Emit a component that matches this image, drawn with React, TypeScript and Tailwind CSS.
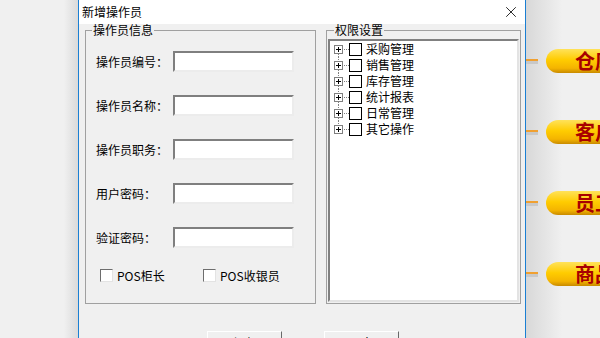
import { X } from 'lucide-react';

const font = { fontFamily: '"Noto Sans CJK SC", "Noto Sans", sans-serif' };

const fields = ['操作员编号：', '操作员名称：', '操作员职务：', '用户密码：', '验证密码：'];
const perms = ['采购管理', '销售管理', '库存管理', '统计报表', '日常管理', '其它操作'];
const menus = ['仓库管理', '客户管理', '员工管理', '商品管理'];

function Check({ dark }: { dark?: boolean }) {
  return (
    <span
      className={
        dark
          ? 'block w-[13px] h-[13px] bg-white border border-black'
          : 'block w-[13px] h-[13px] bg-white border border-t-[#6d6d6d] border-l-[#6d6d6d] border-r-[#e3e3e3] border-b-[#e3e3e3]'
      }
    />
  );
}

// plus box with dotted tree connectors
function Expander({ first, last }: { first: boolean; last: boolean }) {
  return (
    <svg width="15" height="16" className="block shrink-0">
      {!first && <line x1="4.5" y1="0" x2="4.5" y2="4" stroke="#808080" strokeDasharray="1 1" />}
      {!last && <line x1="4.5" y1="13" x2="4.5" y2="16" stroke="#808080" strokeDasharray="1 1" />}
      <rect x="0.5" y="4.5" width="8" height="8" fill="white" stroke="#808080" />
      <line x1="2" y1="8.5" x2="7" y2="8.5" stroke="black" />
      <line x1="4.5" y1="6" x2="4.5" y2="11" stroke="black" />
      <line x1="10" y1="8.5" x2="15" y2="8.5" stroke="#808080" strokeDasharray="1 1" />
    </svg>
  );
}

export default function App() {
  return (
    <div className="w-[600px] h-[338px] overflow-hidden flex bg-[#f0f0f0] text-[12px] text-black" style={font}>
      {/* page behind, left */}
      <div className="w-[78px] shrink-0 bg-[linear-gradient(to_right,#f0f0f0_82%,#dadada)]" />

      {/* dialog */}
      <div className="w-[448px] shrink-0 flex flex-col border-x border-[#1a7fd3] bg-[#f0f0f0]">
        <div className="h-[24px] shrink-0 bg-white flex items-center justify-between pl-[3px] pr-[5px]">
          <span className="leading-[12px]">新增操作员</span>
          <X size={18} strokeWidth={1.1} />
        </div>

        <div className="flex pl-[6px] pr-[4px] gap-[10px]">
          <fieldset className="w-[231px] h-[280px] border border-[#a0a0a0] px-0 pb-0">
            <legend className="ml-[6px] px-[1px] leading-[12px]">操作员信息</legend>
            <div className="flex flex-col pt-[15px] pl-[10px] gap-[23px]">
              {fields.map((f) => (
                <div key={f} className="flex items-center h-[21px]">
                  <span className="w-[77px] leading-[12px]">{f}</span>
                  <span className="w-[121px] h-[21px] bg-white border-2 border-t-[#7f7f7f] border-l-[#7f7f7f] border-r-[#ececec] border-b-[#ececec]" />
                </div>
              ))}
            </div>
            <div className="flex items-center mt-[21px] pl-[14px]">
              <div className="flex items-center gap-[4px] w-[103px]">
                <Check />
                <span className="leading-[12px]">POS柜长</span>
              </div>
              <div className="flex items-center gap-[4px]">
                <Check />
                <span className="leading-[12px]">POS收银员</span>
              </div>
            </div>
          </fieldset>

          <fieldset className="w-[195px] h-[280px] border border-[#a0a0a0] px-[1px] pb-[1px]">
            <legend className="ml-[6px] px-[1px] leading-[12px]">权限设置</legend>
            <div className="mt-[3px] h-[263px] bg-white border-2 border-t-[#808080] border-l-[#808080] border-r-[#e3e3e3] border-b-[#e3e3e3] pl-[4px]">
              {perms.map((p, i) => (
                <div key={p} className="flex items-center h-[16px]">
                  <Expander first={i === 0} last={i === perms.length - 1} />
                  <Check dark />
                  <span className="ml-[4px] leading-[12px]">{p}</span>
                </div>
              ))}
            </div>
          </fieldset>
        </div>

        <div className="flex justify-center gap-[42px] mt-[27px] pl-[1px]">
          <button className="w-[75px] h-[24px] bg-[#f0f0f0] border border-t-white border-l-white border-r-[#696969] border-b-[#696969] leading-[12px]">
            保存
          </button>
          <button className="w-[75px] h-[24px] bg-[#f0f0f0] border border-t-white border-l-white border-r-[#696969] border-b-[#696969] leading-[12px]">
            退出
          </button>
        </div>
      </div>

      {/* page behind, right: menu pills */}
      <div className="flex-1 bg-[linear-gradient(to_right,#d8d8d8,#f0f0f0_28%)] flex flex-col pt-[49px] gap-[47px]">
        {menus.map((m) => (
          <div key={m} className="flex items-center gap-[8px] h-[24px]">
            <div className="w-[12px] flex flex-col">
              <span className="h-[2px] bg-[#f0a030]" />
              <span className="h-[3px] bg-[#c8c8c8]" />
            </div>
            <div className="flex-1 h-[24px] rounded-l-full bg-[linear-gradient(to_bottom,#ffe25a,#ffcc00_45%,#f4b400_80%,#c88a00)] pl-[29px] flex items-center overflow-hidden">
              <span className="text-[20px] font-semibold text-[#a80000] leading-[20px] whitespace-nowrap">{m}</span>
            </div>
          </div>
        ))}
      </div>
    </div>
  );
}
